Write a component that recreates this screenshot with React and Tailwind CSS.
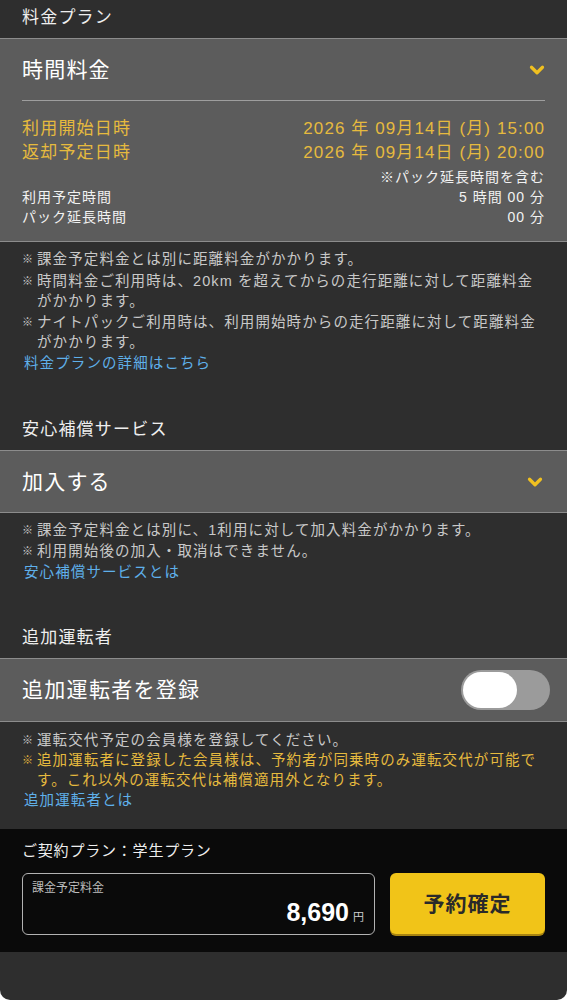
import { ChevronDown } from "lucide-react";

const Note = ({ children, className = "" }) => (
  <div className={`flex ${className}`}>
    <span className="w-[15px] shrink-0 text-[11px] leading-[20px] tracking-normal">※</span>
    <span className="whitespace-nowrap">{children}</span>
  </div>
);

const SectionTitle = ({ children, className = "" }) => (
  <div className={`px-[22px] text-[17px] tracking-[1.2px] text-[#eeeeee] ${className}`}>{children}</div>
);

const SelectRow = ({ label }) => (
  <div className="flex h-[63px] items-center justify-between border-y border-[#8c8c8c] bg-[#5c5c5c] px-[22px]">
    <span className="text-[21px] tracking-[1.2px] text-white">{label}</span>
    <ChevronDown className="mr-[-1px] size-[22px] text-[#f0c020]" strokeWidth={3.5} />
  </div>
);

const App = () => {
  return (
    <div
      className="h-[1000px] w-[567px] overflow-hidden bg-white"
      style={{ fontFamily: '"Liberation Sans", "Noto Sans CJK JP", sans-serif' }}
    >
      <div className="flex h-full flex-col rounded-b-[10px] bg-[#2e2e2e]">
        {/* 料金プラン */}
        <SectionTitle className="pt-[5px] pb-[8px] leading-[25px]">料金プラン</SectionTitle>
        <div className="border-y border-[#8c8c8c] bg-[#5c5c5c]">
          <div className="mx-[22px] flex h-[62px] items-center justify-between border-b border-[#9e9e9e]">
            <span className="text-[21px] tracking-[1.2px] text-white">時間料金</span>
            <ChevronDown className="mr-[-3px] size-[22px] text-[#f0c020]" strokeWidth={3.5} />
          </div>
          <div className="px-[22px] pt-[16px] pb-[14px]">
            <div className="flex justify-between text-[17px] leading-[24px] text-[#e6ba3e]">
              <span className="tracking-[1.2px]">利用開始日時</span>
              <span className="tracking-[1.1px]">2026 年 09月14日 (月) 15:00</span>
            </div>
            <div className="flex justify-between text-[17px] leading-[24px] text-[#e6ba3e]">
              <span className="tracking-[1.2px]">返却予定日時</span>
              <span className="tracking-[1.1px]">2026 年 09月14日 (月) 20:00</span>
            </div>
            <div className="mt-[2px] text-right text-[14px] leading-[20px] tracking-[1px] text-[#f2f2f2]">
              ※パック延長時間を含む
            </div>
            <div className="flex justify-between text-[14px] leading-[20px] tracking-[1px] text-[#f2f2f2]">
              <span>利用予定時間</span>
              <span>5 時間 00 分</span>
            </div>
            <div className="flex justify-between text-[14px] leading-[20px] tracking-[1px] text-[#f2f2f2]">
              <span>パック延長時間</span>
              <span>00 分</span>
            </div>
          </div>
        </div>
        <div className="px-[22px] pt-[7px] text-[14.5px] leading-[20px] tracking-[1.1px] text-[#c9c9c9]">
          <Note>課金予定料金とは別に距離料金がかかります。</Note>
          <Note className="mt-[2px]">
            時間料金ご利用時は、20km を超えてからの走行距離に対して距離料金
            <br />
            がかかります。
          </Note>
          <Note className="mt-[1px]">
            ナイトパックご利用時は、利用開始時からの走行距離に対して距離料金
            <br />
            がかかります。
          </Note>
          <div className="mt-[1px] pl-[2px] text-[#5fb0ea]">料金プランの詳細はこちら</div>
        </div>

        {/* 安心補償サービス */}
        <SectionTitle className="mt-[44px] pb-[8px] leading-[25px]">安心補償サービス</SectionTitle>
        <SelectRow label="加入する" />
        <div className="px-[22px] pt-[7px] text-[14.5px] leading-[20px] tracking-[1.1px] text-[#c9c9c9]">
          <Note>課金予定料金とは別に、1利用に対して加入料金がかかります。</Note>
          <Note className="mt-[1px]">利用開始後の加入・取消はできません。</Note>
          <div className="mt-[1px] pl-[2px] text-[#5fb0ea]">安心補償サービスとは</div>
        </div>

        {/* 追加運転者 */}
        <SectionTitle className="mt-[43px] pb-[8px] leading-[25px]">追加運転者</SectionTitle>
        <div className="flex h-[64px] items-center justify-between border-y border-[#8c8c8c] bg-[#5c5c5c] px-[22px]">
          <span className="text-[21px] tracking-[1.3px] text-white">追加運転者を登録</span>
          <div className="mr-[-5px] flex h-[40px] w-[89px] items-center rounded-full bg-[#9b9b9b] pl-[2px]">
            <div className="h-[36px] w-[54px] rounded-full bg-white" />
          </div>
        </div>
        <div className="px-[22px] pt-[8px] text-[14.5px] leading-[20px] tracking-[1.1px] text-[#c9c9c9]">
          <Note>運転交代予定の会員様を登録してください。</Note>
          <Note className="text-[#e6ba3e]">
            追加運転者に登録した会員様は、予約者が同乗時のみ運転交代が可能で
            <br />
            す。これ以外の運転交代は補償適用外となります。
          </Note>
          <div className="pl-[2px] text-[#5fb0ea]">追加運転者とは</div>
        </div>

        {/* Footer */}
        <div className="mt-[19px] bg-[#0a0a0a] px-[22px] pt-[11px] pb-[17px]">
          <div className="text-[15px] leading-[22px] tracking-[0.8px] text-[#eeeeee]">ご契約プラン：学生プラン</div>
          <div className="mt-[11px] flex gap-[15px]">
            <div className="flex h-[62px] flex-1 flex-col rounded-[6px] border border-[#b3b3b3] px-[9px] pt-[6px]">
              <span className="text-[12px] leading-[16px] text-[#bdbdbd]">課金予定料金</span>
              <div className="mt-[1px] flex items-baseline justify-end pr-[1px]">
                <span className="text-[25px] font-bold leading-[30px] text-white">8,690</span>
                <span className="ml-[4px] text-[11px] text-[#cfcfcf]">円</span>
              </div>
            </div>
            <button className="h-[61px] w-[155px] rounded-[6px] bg-[#f1c418] text-[21px] font-bold tracking-[1px] text-[#2a2a2a] shadow-[0_2px_0_#a88410]">
              予約確定
            </button>
          </div>
        </div>
      </div>
    </div>
  );
};

export default App;
